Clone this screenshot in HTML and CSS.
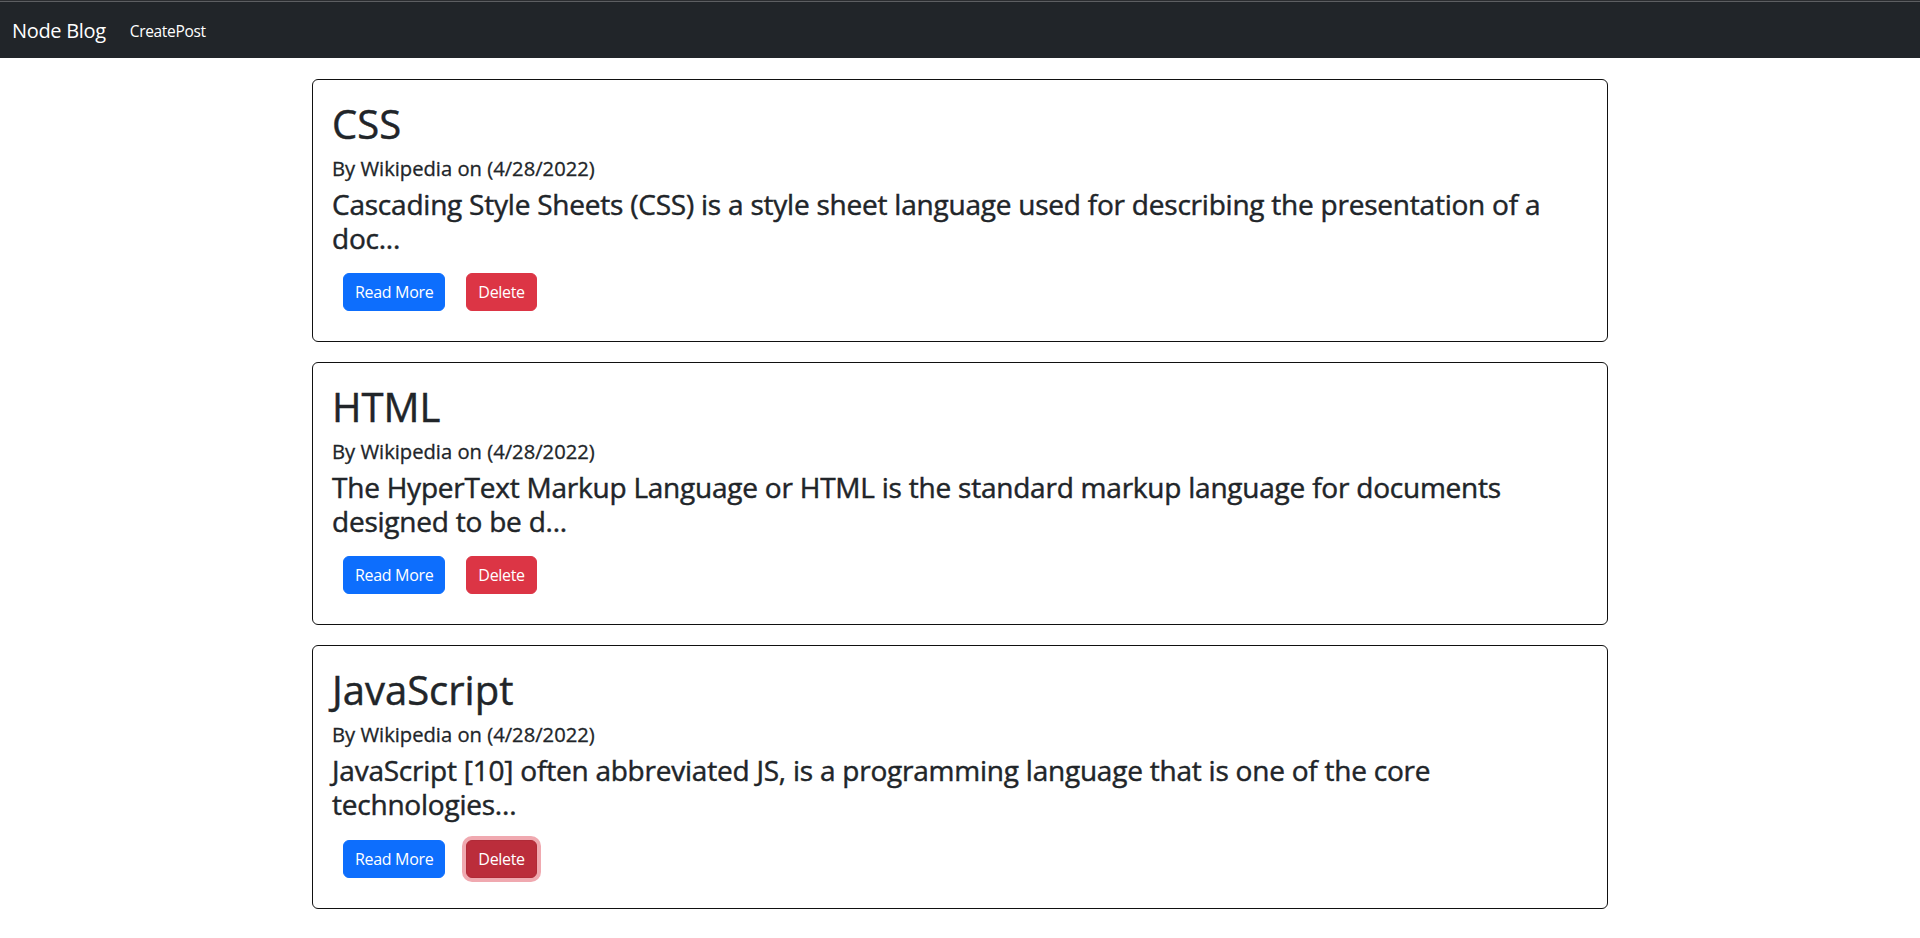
FILE: index.html
```html
<!DOCTYPE html>
<html lang="en">
<head>
<meta charset="utf-8">
<title>Node Blog</title>
<link rel="stylesheet" href="styles.css">
</head>
<body>
<div class="edge"></div>
<nav class="navbar">
  <a class="brand" href="#">Node Blog</a>
  <a class="nav-link" href="#">CreatePost</a>
</nav>
<main class="container">
  <article class="card">
    <h1 class="title">CSS</h1>
    <h5 class="byline">By Wikipedia on (4/28/2022)</h5>
    <h3 class="summary">Cascading Style Sheets (CSS) is a style sheet language used for describing the presentation of a doc...</h3>
    <div class="actions">
      <a class="btn btn-primary" href="#">Read More</a>
      <a class="btn btn-danger" href="#">Delete</a>
    </div>
  </article>
  <article class="card">
    <h1 class="title">HTML</h1>
    <h5 class="byline">By Wikipedia on (4/28/2022)</h5>
    <h3 class="summary">The HyperText Markup Language or HTML is the standard markup language for documents designed to be d...</h3>
    <div class="actions">
      <a class="btn btn-primary" href="#">Read More</a>
      <a class="btn btn-danger" href="#">Delete</a>
    </div>
  </article>
  <article class="card">
    <h1 class="title">JavaScript</h1>
    <h5 class="byline">By Wikipedia on (4/28/2022)</h5>
    <h3 class="summary">JavaScript [10] often abbreviated JS, is a programming language that is one of the core technologies...</h3>
    <div class="actions">
      <a class="btn btn-primary" href="#">Read More</a>
      <a class="btn btn-danger is-focused" href="#">Delete</a>
    </div>
  </article>
</main>
</body>
</html>
```
FILE: styles.css
```css
* { box-sizing: border-box; }

body {
  margin: 0;
  font-family: "Open Sans", "Noto Sans", sans-serif;
  color: #212529;
  background: #fff;
  letter-spacing: -0.02em;
}

.edge {
  height: 2px;
  background: linear-gradient(#2b2d30 0, #2b2d30 1px, #5d5f62 1px, #5d5f62 2px);
}

.navbar {
  height: 56px;
  background: #212529;
  display: flex;
  align-items: center;
  padding: 2px 12px 0;
}

.brand {
  color: #fff;
  font-size: 20px;
  line-height: 30px;
  text-decoration: none;
  margin-right: 16px;
}

.nav-link {
  color: #fff;
  font-size: 15.5px;
  line-height: 24px;
  text-decoration: none;
  padding: 0 8px;
}

.container {
  width: 1296px;
  margin: 0 auto;
  padding-top: 21px;
}

.card {
  border: 1px solid #111;
  border-radius: 6px;
  padding: 20px 16px 0 19px;
}

.card + .card {
  margin-top: 20px;
}

.title,
.byline,
.summary {
  font-weight: 400;
}

.title {
  margin: 0 0 8px;
  font-size: 40px;
  line-height: 48px;
  letter-spacing: 0;
  -webkit-text-stroke: 0.45px currentColor;
}

.byline {
  margin: 0 0 8px;
  font-size: 20.2px;
  line-height: 24px;
  letter-spacing: 0;
  -webkit-text-stroke: 0.3px currentColor;
}

.summary {
  margin: 0 0 8px;
  font-size: 28px;
  line-height: 33.6px;
  letter-spacing: -0.008em;
  -webkit-text-stroke: 0.45px currentColor;
}

.actions {
  display: flex;
  gap: 21px;
  padding: 10px 0 30px 11px;
}

.btn {
  display: inline-block;
  font-size: 16px;
  line-height: 24px;
  padding: 6px 11px;
  border: 1px solid transparent;
  border-radius: 6px;
  color: #fff;
  text-decoration: none;
}

.btn-primary {
  background: #0d6efd;
  border-color: #0d6efd;
}

.btn-danger {
  background: #dc3545;
  border-color: #dc3545;
}

.btn-danger.is-focused {
  background: #bb2d3b;
  border-color: #b02a37;
  box-shadow: 0 0 0 4px rgba(225, 83, 97, 0.5);
}
```
